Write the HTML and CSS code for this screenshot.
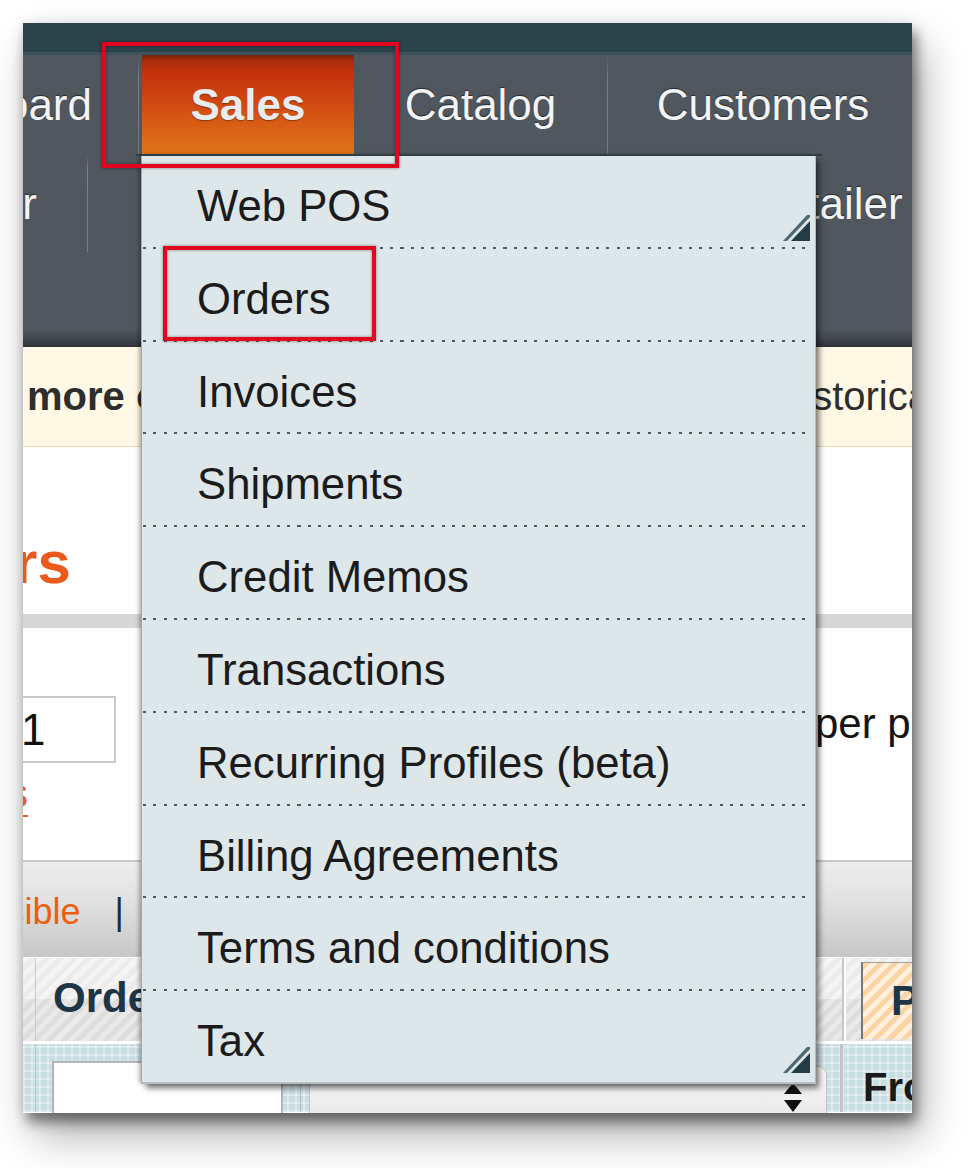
FILE: index.html
```html
<!DOCTYPE html>
<html lang="en">
<head>
<meta charset="utf-8">
<title>Sales menu</title>
<link rel="stylesheet" href="styles.css">
</head>
<body>
<div class="shot">
  <div class="topstrip"></div>
  <nav class="nav">
    <ul class="nav-row row1">
      <li class="tab tab-dash"><span>Dashboard</span></li>
      <li class="tab-sep sep-gap"></li>
      <li class="tab tab-sales">Sales</li>
      <li class="tab tab-catalog">Catalog</li>
      <li class="tab-sep"></li>
      <li class="tab tab-customers">Customers</li>
    </ul>
    <ul class="nav-row row2">
      <li class="tab tab-news"><span>Newsletter</span></li>
      <li class="tab-sep sep-short"></li>
      <li class="tab tab-retailer">Retailer</li>
    </ul>
  </nav>

  <div class="notice">
    <span class="n-left">One or more of</span>
    <span class="n-right">historical data</span>
  </div>

  <div class="heading-area">
    <h3 class="page-title">Orders</h3>
  </div>
  <div class="gray-sep"></div>

  <div class="form-area">
    <div class="form-left">
      <div class="page-input">1</div>
      <a class="reset-link">s</a>
    </div>
    <div class="per-page">per page</div>
  </div>

  <div class="toolbar">
    <a class="tb-link">Select Visible</a>
    <span class="tb-pipe">|</span>
  </div>

  <div class="grid-head">
    <div class="gh-cell gh-first"></div>
    <div class="gh-cell gh-order">Order #</div>
    <div class="gh-cell gh-last"><div class="sort-box">Purchased On</div></div>
  </div>

  <div class="grid-filter">
    <div class="gf-cell gf-first"></div>
    <div class="gf-cell gf-input"><div class="filter-input"></div></div>
    <div class="gf-cell gf-select">
      <div class="filter-select">
        <svg class="sel-arrows" width="22" height="30" viewBox="0 0 22 30"><path d="M11 1 C9 1 8 3 6 5 L2 10 H20 L16 5 C14 3 13 1 11 1 Z" fill="#111"/><path d="M2 16 H20 L11 28 Z" fill="#111"/></svg>
      </div>
    </div>
    <div class="gf-cell gf-last">From</div>
  </div>

  <ul class="menu">
    <li>Web POS<svg class="grip" width="27" height="26" viewBox="0 0 27 26"><polygon points="0,26 24,0 27,0 27,2 4,26" fill="#4f6973"/><polygon points="8,26 27,6 27,26" fill="#233c45"/></svg></li>
    <li>Orders</li>
    <li>Invoices</li>
    <li>Shipments</li>
    <li>Credit Memos</li>
    <li>Transactions</li>
    <li>Recurring Profiles (beta)</li>
    <li>Billing Agreements</li>
    <li>Terms and conditions</li>
    <li>Tax<svg class="grip grip-last" width="27" height="26" viewBox="0 0 27 26"><polygon points="0,26 24,0 27,0 27,2 4,26" fill="#4f6973"/><polygon points="8,26 27,6 27,26" fill="#233c45"/></svg></li>
  </ul>

  <div class="hl hl-sales"></div>
  <div class="hl hl-orders"></div>
</div>
</body>
</html>
```
FILE: styles.css
```css
* { box-sizing: border-box; }
html, body { margin: 0; padding: 0; }
body {
  background: #fff;
  width: 967px;
  height: 1168px;
  overflow: hidden;
  font-family: "Liberation Sans", Arial, sans-serif;
}
ul { list-style: none; margin: 0; padding: 0; }

.shot {
  position: relative;
  margin: 23px 0 0 23px;
  width: 889px;
  height: 1090px;
  overflow: hidden;
  background: #fff;
  box-shadow: 4px 9px 12px rgba(0,0,0,.45), 10px 22px 40px rgba(0,0,0,.32), 0 0 16px rgba(0,0,0,.06);
}

.topstrip {
  height: 32px;
  background: #2b434b;
  border-bottom: 3px solid #3d535b;
}

.nav {
  height: 292px;
  background: linear-gradient(#50575e, #50575e calc(100% - 18px), #40464c calc(100% - 8px), #2c3136);
}
.nav-row {
  display: flex;
  white-space: nowrap;
  color: #f3f4f5;
  font-size: 44px;
  text-shadow: 0 -1px 1px rgba(0,0,0,.55);
}
.row1 { height: 100px; line-height: 100px; }
.row2 { height: 97px; line-height: 97px; }
.tab { flex: 0 0 auto; min-width: 0; }
.tab-sep {
  flex: 0 0 1px;
  background: linear-gradient(rgba(125,131,137,0), #7b8187 25%, #72787e);
}
.sep-gap { margin-right: 3px; }
.sep-short { background: linear-gradient(rgba(125,131,137,0), #7d8388 15%, #7a8086); }

.tab-dash {
  flex: 0 0 115px;
  display: flex;
  justify-content: flex-end;
  padding-right: 46px;
}
.tab-dash span, .tab-news span { flex: 0 0 auto; }
.tab-sales {
  flex: 0 0 212px;
  text-align: center;
  font-weight: bold;
  color: #e8ecef;
  text-shadow: 0 1px 1px rgba(90,30,5,.6);
  background: linear-gradient(#6e2408 0, #a82b0b 5%, #c4320c 18%, #cf4611 45%, #da6216 75%, #e07419 100%);
}
.tab-catalog { flex: 0 0 253px; text-align: center; }
.tab-customers { flex: 0 0 310px; text-align: center; }
.tab-news {
  flex: 0 0 64px;
  display: flex;
  justify-content: flex-end;
  padding-right: 50px;
}
.tab-retailer { margin-left: 663px; }

.notice {
  height: 100px;
  background: #fef8e5;
  border-bottom: 1px solid #e8dab0;
  display: flex;
  white-space: nowrap;
  font-size: 40px;
  line-height: 99px;
  color: #2d2d2d;
}
.n-left { flex: 0 0 894px; margin-left: -136px; font-weight: bold; }
.n-right { flex: 0 0 auto; }

.heading-area { height: 167px; padding-top: 86px; }
.page-title {
  margin: 0 0 0 -149px;
  font-size: 60px;
  line-height: 60px;
  font-weight: bold;
  color: #ea5a1c;
  white-space: nowrap;
}
.gray-sep { height: 14px; background: #d7d7d7; }

.form-area {
  height: 234px;
  border-bottom: 2px solid #c8c8c8;
  display: grid;
  grid-template-columns: 792px 1fr;
}
.form-left { padding-top: 68px; }
.page-input {
  margin-left: -20px;
  width: 113px;
  height: 67px;
  border: 2px solid #c9c9c9;
  background: #fff;
  font-size: 44px;
  line-height: 63px;
  padding-left: 16px;
  color: #111;
}
.reset-link {
  display: block;
  margin: 10px 0 0 -15px;
  font-size: 40px;
  line-height: 40px;
  color: #ea5a1c;
  text-decoration: underline;
  text-decoration-thickness: 2px;
  text-underline-offset: 8px;
}
.per-page {
  margin-top: 75px;
  font-size: 42px;
  line-height: 42px;
  color: #151515;
  white-space: nowrap;
}

.toolbar {
  height: 95px;
  padding-top: 4px;
  display: flex;
  white-space: nowrap;
  font-size: 36px;
  line-height: 91px;
  background: linear-gradient(#ededed, #e3e3e3 35%, #d2d2d2 75%, #c6c6c6);
}
.tb-link { margin-left: -158px; color: #eb5e10; }
.tb-pipe { margin-left: 34px; color: #1e2c38; }

.grid-head {
  height: 87px;
  display: flex;
  border-top: 1px solid #fff;
  border-bottom: 3px solid #fff;
  font-size: 42px;
  font-weight: bold;
  color: #1d3546;
  white-space: nowrap;
}
.gh-cell {
  flex: 0 0 auto;
  background:
    linear-gradient(rgba(255,255,255,.25) 0, rgba(255,255,255,.25) 50%, rgba(0,0,0,.03) 50%, rgba(0,0,0,.03) 100%),
    repeating-linear-gradient(135deg, #f1f1f1 0 5px, #e4e4e4 5px 10px);
}
.gh-first { width: 13px; border-right: 1px solid #cacaca; }
.gh-order { width: 808px; padding-left: 17px; line-height: 80px; border-right: 2px solid #c6c6c6; }
.gh-last { flex: 1; padding: 4px 0 2px 15px; border-left: 2px solid #fff; }
.sort-box {
  height: 77px;
  border-left: 2px solid #777;
  border-top: 1px solid #a0a0a0;
  padding-left: 28px;
  line-height: 76px;
  background: repeating-linear-gradient(135deg, #fbd3a5 0 5px, #fff0dd 5px 10px);
}

.grid-filter {
  height: 68px;
  display: flex;
  background-color: #c9dee2;
  background-image:
    repeating-linear-gradient(90deg, rgba(255,255,255,.35) 0 2px, transparent 2px 8px),
    repeating-linear-gradient(0deg, rgba(255,255,255,.35) 0 2px, transparent 2px 8px);
}
.gf-cell { flex: 0 0 auto; }
.gf-first { width: 13px; border-right: 1px solid #b7c7ca; }
.gf-input { width: 265px; padding: 17px 0 0 16px; border-right: 1px solid #b3c2c5; }
.filter-input {
  width: 231px;
  height: 60px;
  background: #fff;
  border: 2px solid #b5b5b5;
}
.gf-select { width: 542px; padding: 22px 0 0 8px; border-right: 3px solid #c4c4c4; }
.filter-select {
  width: 518px;
  height: 60px;
  border: 1px solid #c3c3c3;
  border-radius: 9px;
  background: linear-gradient(#f8f8f8, #e6e6e6);
  display: flex;
  justify-content: flex-end;
  padding: 17px 22px 0 0;
}
.gf-last {
  flex: 1;
  padding: 22px 0 0 19px;
  font-size: 40px;
  line-height: 42px;
  font-weight: bold;
  color: #1a1a1a;
  white-space: nowrap;
  border-left: 1px solid #e6eef0;
}

.menu {
  position: absolute;
  left: 118px;
  top: 131px;
  width: 675px;
  background: #dde6e9;
  border-top: 2px solid #2d3e45;
  border-left: 1px solid #a2aaad;
  border-right: 1px solid #b3babd;
  border-bottom: 2px solid #b8bfc2;
  box-shadow: 4px 5px 6px -1px rgba(0,0,0,.55), -3px 0 4px -1px rgba(0,0,0,.3);
  font-size: 43.7px;
  color: #1b1b1b;
  white-space: nowrap;
}
.menu::before {
  content: "";
  position: absolute;
  top: -2px;
  left: -6px;
  right: -7px;
  height: 2px;
  background: #2d3e45;
}
.menu li {
  position: relative;
  height: 92.8px;
  padding: 7px 0 0 55px;
  line-height: 85px;
  background: repeating-linear-gradient(90deg, #4b5b61 0 3px, transparent 3px 10.3px) 1px 100% / calc(100% - 4px) 2px no-repeat;
}
.menu li:last-child { background: none; height: 91px; }
.grip { position: absolute; right: 5px; bottom: 8px; }
.grip-last { bottom: 9px; }

.hl {
  position: absolute;
  border: 4px solid #e2051d;
  box-shadow: 0 0 3px rgba(0,0,0,.45), inset 0 0 3px rgba(0,0,0,.45);
}
.hl-sales { left: 79px; top: 19px; width: 297px; height: 126px; }
.hl-orders { left: 140px; top: 223px; width: 213px; height: 95px; }
```
